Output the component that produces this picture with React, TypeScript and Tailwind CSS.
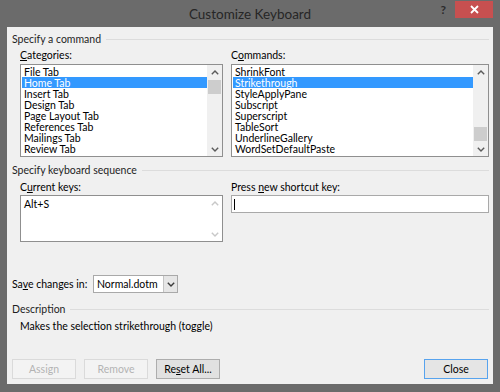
import React from "react";

const F = "font-['Lato',sans-serif]";

function Chevron({ up, color = "#5a5a5a" }: { up?: boolean; color?: string }) {
  return (
    <svg width="8" height="5" viewBox="0 0 8 5">
      <polyline
        points={up ? "0.8,4.2 4,1 7.2,4.2" : "0.8,0.8 4,4 7.2,0.8"}
        fill="none"
        stroke={color}
        strokeWidth="1.4"
      />
    </svg>
  );
}

function ScrollBar({ thumbClass, disabled }: { thumbClass?: string; disabled?: boolean }) {
  const c = disabled ? "#c8c8c8" : "#5a5a5a";
  return (
    <div className={`flex w-[15px] flex-col ${disabled ? "bg-white" : "bg-[#f0f0f0]"}`}>
      <div className="flex h-[14px] items-center justify-center">
        <Chevron up color={c} />
      </div>
      <div className="flex flex-1 flex-col px-[1px]">
        {thumbClass ? <div className={`h-[14px] bg-[#cdcdcd] ${thumbClass}`} /> : null}
      </div>
      <div className="flex h-[14px] items-center justify-center">
        <Chevron color={c} />
      </div>
    </div>
  );
}

function ListBox({
  items,
  selected,
  thumbClass,
  className,
}: {
  items: string[];
  selected: number;
  thumbClass: string;
  className: string;
}) {
  return (
    <div className={`flex h-[93px] border border-[#8f8f8f] bg-white ${className}`}>
      <div className="flex min-w-0 flex-1 flex-col pl-[1px] pt-[1px]">
        {items.map((it, i) => (
          <div
            key={it}
            className={`h-[11px] whitespace-nowrap pl-[2px] text-[10.5px] leading-[12px] ${
              i === selected ? "bg-[#3399ff] text-white" : "text-black"
            }`}
          >
            {it}
          </div>
        ))}
      </div>
      <ScrollBar thumbClass={thumbClass} />
    </div>
  );
}

function SectionHeader({ text }: { text: string }) {
  return (
    <div className="flex h-[14px] items-center">
      <span className="text-[10.5px] leading-[14px] text-[#1e1e1e]">{text}</span>
      <div className="ml-[5px] h-px flex-1 bg-[#dcdcdc]" />
    </div>
  );
}

function Btn({
  children,
  kind,
}: {
  children: React.ReactNode;
  kind: "disabled" | "normal" | "default";
}) {
  const cls =
    kind === "disabled"
      ? "border-[#dadada] bg-[#f3f3f3] text-[#b3b3b3]"
      : kind === "normal"
      ? "border-[#adadad] bg-[#e1e1e1] text-black"
      : "border-[#57a3ee] bg-[#e5e5e5] text-black";
  return (
    <div
      className={`flex h-[20px] w-[64px] items-center justify-center border text-[10.5px] leading-none ${cls}`}
    >
      {children}
    </div>
  );
}

export default function App() {
  return (
    <div className={`flex h-[392px] w-[500px] flex-col bg-[#6b6b6b] ${F}`}>
      {/* title bar */}
      <div className="grid h-[27px] grid-cols-[1fr_auto_1fr] items-start">
        <div />
        <div className="pt-[5px] text-[13.5px] leading-[18px] text-[#262626]">Customize Keyboard</div>
        <div className="flex items-start justify-end pr-[7px] pt-[1px]">
          <div className="mr-[9px] mt-[2px] text-[12px] font-bold leading-[14px] text-[#2b2b2b]">?</div>
          <div className="flex h-[17px] w-[38px] items-center justify-center bg-[#c75050]">
            <svg width="9" height="9" viewBox="0 0 9 9">
              <path d="M1 1 L8 8 M8 1 L1 8" stroke="white" strokeWidth="1.8" />
            </svg>
          </div>
        </div>
      </div>

      {/* client */}
      <div className="mx-[7px] flex h-[357px] flex-col bg-[#f0f0f0] pl-[5px] pr-[4px] pt-[5px]">
        <SectionHeader text="Specify a command" />
        <div className="mt-[2px] flex pl-[8px] text-[10.5px] leading-[14px] text-black">
          <div className="w-[211px]">
            <u className="underline-offset-[1px]">C</u>ategories:
          </div>
          <div>
            C<u className="underline-offset-[1px]">o</u>mmands:
          </div>
        </div>
        <div className="mt-[2px] flex gap-[8px] pl-[8px]">
          <ListBox
            className="w-[203px]"
            items={[
              "File Tab",
              "Home Tab",
              "Insert Tab",
              "Design Tab",
              "Page Layout Tab",
              "References Tab",
              "Mailings Tab",
              "Review Tab",
            ]}
            selected={1}
            thumbClass="mt-[1px]"
          />
          <ListBox
            className="flex-1"
            items={[
              "ShrinkFont",
              "Strikethrough",
              "StyleApplyPane",
              "Subscript",
              "Superscript",
              "TableSort",
              "UnderlineGallery",
              "WordSetDefaultPaste",
            ]}
            selected={1}
            thumbClass="mt-auto mb-[1px]"
          />
        </div>

        <div className="mt-[6px]">
          <SectionHeader text="Specify keyboard sequence" />
        </div>
        <div className="mt-[3px] flex pl-[8px] text-[10.5px] leading-[14px] text-black">
          <div className="w-[211px]">
            C<u className="underline-offset-[1px]">u</u>rrent keys:
          </div>
          <div>
            Press <u className="underline-offset-[1px]">n</u>ew shortcut key:
          </div>
        </div>
        <div className="mt-[1px] flex items-start gap-[8px] pl-[8px]">
          <div className="flex h-[47px] w-[203px] border border-[#8f8f8f] bg-white">
            <div className="flex-1 pl-[3px] pt-[1px] text-[10.5px] leading-[14px] text-black">Alt+S</div>
            <ScrollBar disabled />
          </div>
          <div className="flex h-[18px] flex-1 items-center border border-[#a9a9a9] bg-white pl-[2px]">
            <div className="h-[11px] w-px bg-black" />
          </div>
        </div>

        <div className="mt-[33px] flex h-[18px] items-center">
          <div className="w-[81px] text-[10.5px] leading-[14px] text-black">
            Sa<u className="underline-offset-[1px]">v</u>e changes in:
          </div>
          <div className="flex h-[18px] w-[85px] border border-[#a9a9a9] bg-white">
            <div className="flex flex-1 items-center pl-[3px] text-[10.5px] leading-none text-black">
              Normal.dotm
            </div>
            <div className="flex w-[14px] items-center justify-center border-l border-[#c4c4c4] bg-[#e6e6e6]">
              <Chevron color="#3a3a3a" />
            </div>
          </div>
        </div>

        <div className="mt-[9px]">
          <SectionHeader text="Description" />
        </div>
        <div className="mt-[3px] pl-[8px] text-[10.5px] leading-[14px] text-black">
          Makes the selection strikethrough (toggle)
        </div>

        <div className="mt-[26px] flex items-center pr-[1px]">
          <div className="flex gap-[8px]">
            <Btn kind="disabled">Assign</Btn>
            <Btn kind="disabled">Remove</Btn>
            <Btn kind="normal">
              <span>
                Re<u className="underline-offset-[1px]">s</u>et All...
              </span>
            </Btn>
          </div>
          <div className="ml-auto">
            <Btn kind="default">Close</Btn>
          </div>
        </div>
      </div>
    </div>
  );
}
